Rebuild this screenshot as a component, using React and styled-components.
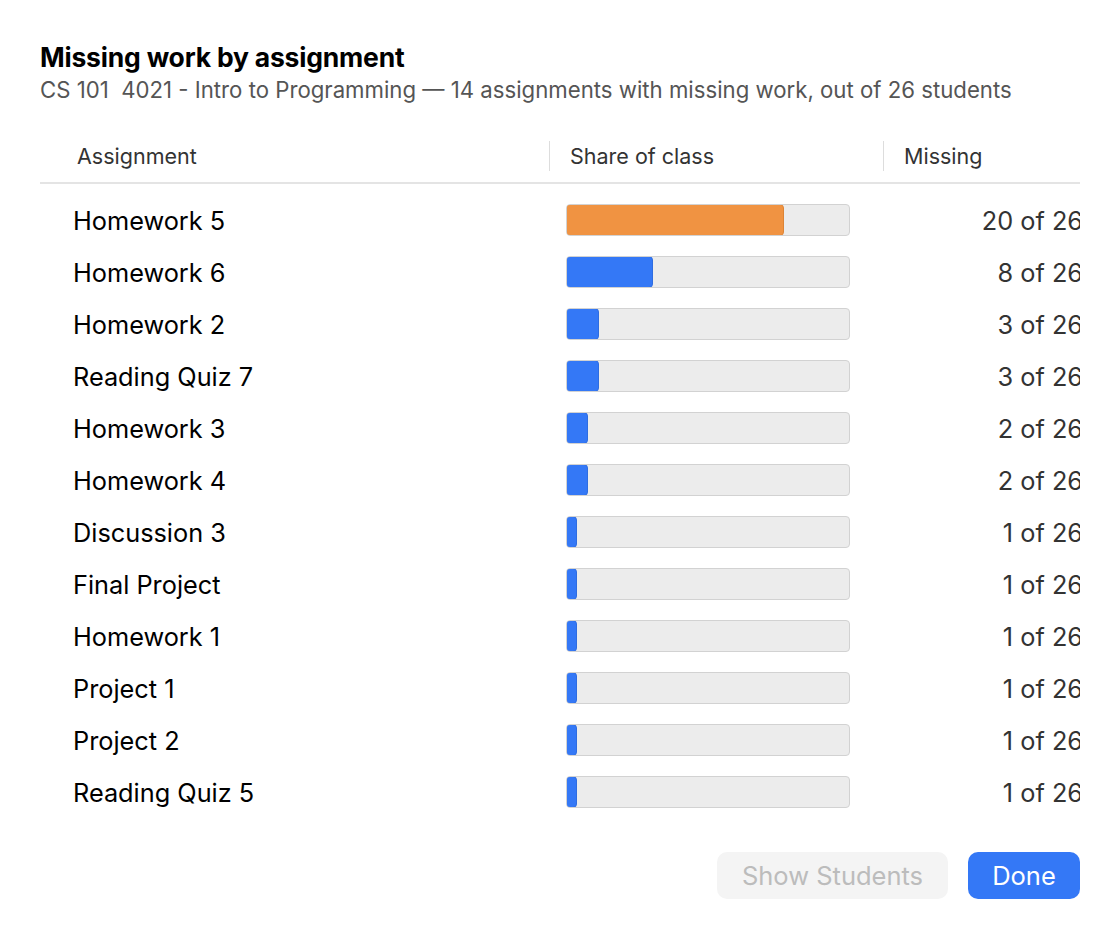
import React from "react";
import styled, { createGlobalStyle } from "styled-components";

const Global = createGlobalStyle`
  html, body { margin: 0; padding: 0; background: #ffffff; }
  body { font-family: Inter, "Noto Sans", "Liberation Sans", sans-serif; color: #000; -webkit-font-smoothing: antialiased; }
`;

const Sheet = styled.div`
  width: 1120px;
  height: 936px;
  box-sizing: border-box;
  padding: 40px 40px 0 40px;
  display: flex;
  flex-direction: column;
`;

const Title = styled.h1`
  margin: 0;
  font-size: 26.5px;
  line-height: 34px;
  font-weight: 700;
  color: #000;
  letter-spacing: -0.2px;
`;

const Subtitle = styled.div`
  margin-top: 2px;
  font-size: 22.2px;
  line-height: 28px;
  color: #555555;
`;

const Table = styled.div`
  margin-top: 26px;
  width: 1040px;
  overflow: hidden;
`;

const HeaderRow = styled.div`
  display: flex;
  align-items: center;
  height: 52px;
  border-bottom: 2px solid #e4e4e4;
  width: 1040px;
`;

const HeaderCell = styled.div`
  box-sizing: border-box;
  width: ${(p) => p.$w}px;
  flex: none;
  padding-left: ${(p) => p.$pad}px;
  font-size: 21.5px;
  color: #333333;
  height: 30px;
  line-height: 30px;
  border-left: ${(p) => (p.$divider ? "1px solid #dddddd" : "none")};
`;

const Body = styled.div`
  padding-top: 10px;
`;

const Row = styled.div`
  display: flex;
  align-items: center;
  height: 52px;
  width: 1060px;
  padding-left: 33px;
  box-sizing: border-box;
`;

const Name = styled.div`
  width: 493px;
  flex: none;
  font-size: 25.3px;
  color: #000;
`;

const Track = styled.div`
  position: relative;
  width: 284px;
  height: 32px;
  flex: none;
  box-sizing: border-box;
  background: #ececec;
  border: 1px solid #d2d2d2;
  border-radius: 4px;
  overflow: hidden;
`;

const Fill = styled.div`
  position: absolute;
  left: -1px;
  top: -1px;
  bottom: -1px;
  background: ${(p) => (p.$hot ? "#f09342" : "#3478f6")};
  border: 1px solid ${(p) => (p.$hot ? "#dd8436" : "#2f6de0")};
  box-sizing: border-box;
  border-radius: 4px;
`;

const Count = styled.div`
  width: 233px;
  flex: none;
  text-align: right;
  font-size: 25.3px;
  color: #333333;
  white-space: nowrap;
`;

const Footer = styled.div`
  margin-top: 34px;
  display: flex;
  justify-content: flex-end;
  gap: 20px;
`;

const Button = styled.button`
  height: 47px;
  padding: 0 20px;
  min-width: ${(p) => (p.$primary ? 112 : 231)}px;
  border: none;
  border-radius: 10px;
  font-family: inherit;
  font-size: 25.5px;
  background: ${(p) => (p.$primary ? "#3478f6" : "#f4f4f4")};
  color: ${(p) => (p.$primary ? "#ffffff" : "#bcbcbc")};
  cursor: ${(p) => (p.$primary ? "pointer" : "default")};
`;

const data = [
  ["Homework 5", 20],
  ["Homework 6", 8],
  ["Homework 2", 3],
  ["Reading Quiz 7", 3],
  ["Homework 3", 2],
  ["Homework 4", 2],
  ["Discussion 3", 1],
  ["Final Project", 1],
  ["Homework 1", 1],
  ["Project 1", 1],
  ["Project 2", 1],
  ["Reading Quiz 5", 1],
];

const TOTAL = 26;

export default function App() {
  return (
    <>
      <Global />
      <Sheet>
        <Title>Missing work by assignment</Title>
        <Subtitle>
          CS 101&nbsp; 4021 - Intro to Programming — 14 assignments with missing work, out of 26 students
        </Subtitle>
        <Table>
          <HeaderRow>
            <HeaderCell $w={509} $pad={37}>Assignment</HeaderCell>
            <HeaderCell $w={334} $pad={20} $divider>Share of class</HeaderCell>
            <HeaderCell $w={197} $pad={20} $divider>Missing</HeaderCell>
          </HeaderRow>
          <Body>
            {data.map(([name, n], i) => (
              <Row key={name}>
                <Name>{name}</Name>
                <Track>
                  <Fill $hot={i === 0} style={{ width: `${(n / TOTAL) * 284}px` }} />
                </Track>
                <Count>{n} of {TOTAL}</Count>
              </Row>
            ))}
          </Body>
        </Table>
        <Footer>
          <Button disabled>Show Students</Button>
          <Button $primary>Done</Button>
        </Footer>
      </Sheet>
    </>
  );
}
